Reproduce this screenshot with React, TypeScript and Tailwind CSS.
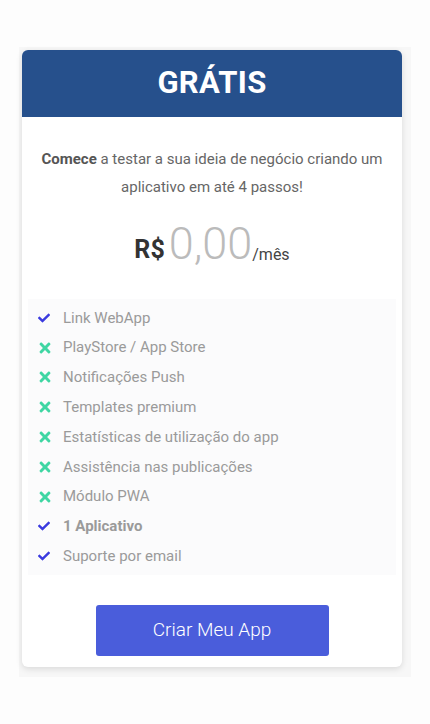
import { FaCheck, FaTimes } from "react-icons/fa";

type Feature = { label: string; ok: boolean; bold?: boolean };

const features: Feature[] = [
  { label: "Link WebApp", ok: true },
  { label: "PlayStore / App Store", ok: false },
  { label: "Notificações Push", ok: false },
  { label: "Templates premium", ok: false },
  { label: "Estatísticas de utilização do app", ok: false },
  { label: "Assistência nas publicações", ok: false },
  { label: "Módulo PWA", ok: false },
  { label: "1 Aplicativo", ok: true, bold: true },
  { label: "Suporte por email", ok: true },
];

export default function App() {
  return (
    <div className="min-h-[724px] bg-[#fdfdfd] pt-[47px] font-['Roboto',sans-serif]">
      <div className="ml-[19px] w-[392px] bg-[#f7f7f7] pb-[10px] pl-[3px] pt-[3px]">
        <div className="w-[380px] overflow-hidden rounded-[6px] bg-white shadow-[0_2px_6px_rgba(0,0,0,0.12)]">
          <div className="flex h-[67px] items-center justify-center bg-[#26508c]">
            <h2 className="text-[31px] font-bold tracking-[0.3px] text-white">GRÁTIS</h2>
          </div>

          <p className="px-4 pt-[28px] text-center text-[15px] leading-[28px] text-[#666]">
            <b className="font-bold text-[#555]">Comece</b> a testar a sua ideia de negócio criando um aplicativo em até 4 passos!
          </p>

          <div className="mt-[20px] flex items-end justify-center">
            <span className="mb-[4px] text-[25px] font-bold leading-none text-[#333]">R$</span>
            <span className="ml-[4px] text-[45px] font-light leading-none text-[#bbb]">0,00</span>
            <span className="mb-[3px] text-[16px] leading-none text-[#444]">/mês</span>
          </div>

          <ul className="mx-[6px] mt-[33px] bg-[#fbfbfc] px-[10px] py-[4px]">
            {features.map((f) => (
              <li key={f.label} className="flex h-[29.8px] items-center">
                <span className="flex w-[25px] items-center">
                  {f.ok ? (
                    <FaCheck className="h-[12px] w-[12px] text-[#3a3adf]" />
                  ) : (
                    <FaTimes className="-ml-[1px] h-[16px] w-[16px] text-[#3fd6a3]" />
                  )}
                </span>
                <span className={`text-[15px] text-[#9a9a9a] ${f.bold ? "font-bold" : ""}`}>{f.label}</span>
              </li>
            ))}
          </ul>

          <div className="flex justify-center pb-[11px] pt-[30px]">
            <button
              type="button"
              className="h-[51px] w-[233px] rounded-[3px] bg-[#4a5ddb] text-[19px] font-light text-white"
            >
              Criar Meu App
            </button>
          </div>
        </div>
      </div>
    </div>
  );
}
